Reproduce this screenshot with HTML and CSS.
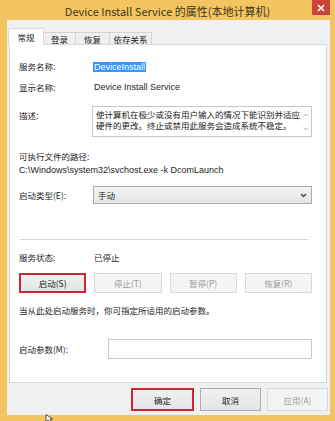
FILE: index.html
```html
<!DOCTYPE html>
<html>
<head>
<meta charset="utf-8">
<link rel="stylesheet" href="styles.css">
</head>
<body>
<div class="window">
  <div class="titlebar">
    <span class="title">Device Install Service 的属性(本地计算机)</span>
    <div class="close">
      <svg width="8" height="8" viewBox="0 0 8 8"><path d="M1 1L7 7M7 1L1 7" stroke="#fff" stroke-width="1.6"/></svg>
    </div>
  </div>
  <div class="client">
    <div class="tabs">
      <div class="tab active">常规</div>
      <div class="tab">登录</div>
      <div class="tab">恢复</div>
      <div class="tab">依存关系</div>
    </div>
    <div class="panel">
      <div class="row r1">
        <span class="label">服务名称:</span>
        <span class="value"><span class="sel">DeviceInstall</span></span>
      </div>
      <div class="row r2">
        <span class="label">显示名称:</span>
        <span class="value latin">Device Install Service</span>
      </div>
      <div class="row r3">
        <span class="label desc-label">描述:</span>
        <div class="textbox">
          <div class="tb-text">使计算机在极少或没有用户输入的情况下能识别并适应硬件的更改。终止或禁用此服务会造成系统不稳定。</div>
          <div class="scroll">
            <svg width="6" height="4" viewBox="0 0 6 4"><path d="M0.5 3.5L3 1L5.5 3.5" fill="none" stroke="#b8b8b8" stroke-width="1"/></svg>
            <svg width="6" height="4" viewBox="0 0 6 4"><path d="M0.5 0.5L3 3L5.5 0.5" fill="none" stroke="#b8b8b8" stroke-width="1"/></svg>
          </div>
        </div>
      </div>
      <div class="row r4"><span class="label">可执行文件的路径:</span></div>
      <div class="row r5"><span class="latin">C:\Windows\system32\svchost.exe -k DcomLaunch</span></div>
      <div class="row r6">
        <span class="label">启动类型(E):</span>
        <div class="select">
          <span>手动</span>
          <svg width="7" height="5" viewBox="0 0 7 5"><path d="M1 1L3.5 3.5L6 1" fill="none" stroke="#444" stroke-width="1.3"/></svg>
        </div>
      </div>
      <div class="sep"></div>
      <div class="row r7">
        <span class="label">服务状态:</span>
        <span class="value">已停止</span>
      </div>
      <div class="btnrow">
        <div class="btn marked">启动(S)</div>
        <div class="btn disabled">停止(T)</div>
        <div class="btn disabled">暂停(P)</div>
        <div class="btn disabled">恢复(R)</div>
      </div>
      <div class="row r8">当从此处启动服务时，你可指定所适用的启动参数。</div>
      <div class="row r9">
        <span class="label wide">启动参数(M):</span>
        <div class="input"></div>
      </div>
    </div>
    <div class="footer">
      <div class="btn fbtn marked">确定</div>
      <div class="btn fbtn">取消</div>
      <div class="btn fbtn disabled">应用(A)</div>
    </div>
  </div>
  <svg class="cursor" width="9" height="8" viewBox="0 0 9 8"><path d="M1 0.5L1 8L3 6L5 8.5L6.5 7.5L4.8 5.2L7.5 5Z" fill="#fff" stroke="#222" stroke-width="0.8"/></svg>
</div>
</body>
</html>
```

FILE: styles.css
```css
* { box-sizing: border-box; }
html, body { margin: 0; padding: 0; }
body {
  width: 335px;
  height: 421px;
  overflow: hidden;
  background: #f2c35a;
  font-family: "Noto Sans CJK SC", "Liberation Sans", sans-serif;
  font-size: 8.5px;
  color: #1e1e1e;
}
.window {
  position: relative;
  width: 335px;
  height: 421px;
  background: #f3c55e;
  display: flex;
  flex-direction: column;
}
.titlebar {
  height: 20px;
  display: flex;
  align-items: center;
  justify-content: center;
  padding-top: 2px;
}
.title {
  font-size: 11px;
  color: #403621;
}
.close {
  position: absolute;
  top: 0;
  right: 5px;
  width: 18px;
  height: 15px;
  background: #c9453b;
  display: flex;
  align-items: center;
  justify-content: center;
}
.client {
  margin: 0 5px 0 7px;
  height: 395px;
  background: #f0f0f0;
  display: flex;
  flex-direction: column;
}
.tabs {
  display: flex;
  align-items: flex-end;
  padding: 7px 0 0 1px;
  height: 24px;
}
.tab {
  height: 12px;
  padding: 0;
  border: 1px solid #d4d4d4;
  border-bottom: none;
  background: #f0f0f0;
  display: flex;
  align-items: center;
  justify-content: center;
  white-space: nowrap;
  margin-left: -1px;
  color: #222;
  flex: none;
}
.tab:nth-child(1) { width: 36px; margin-left: 0; }
.tab:nth-child(2) { width: 33px; }
.tab:nth-child(3) { width: 35px; }
.tab:nth-child(4) { width: 43px; }
.tab.active {
  height: 17px;
  background: #fff;
  position: relative;
  z-index: 1;
  margin-bottom: -1px;
  padding-bottom: 1px;
  border-color: #d9d9d9;
}
.panel {
  margin: 0 3px 0 2px;
  height: 339px;
  background: #fff;
  border: 1px solid #d9d9d9;
  padding: 0 14px 0 9px;
  display: flex;
  flex-direction: column;
}
.row {
  display: flex;
  align-items: center;
  height: 14px;
  white-space: nowrap;
}
.label { width: 75px; flex: none; }
.label.wide { width: 89px; }
.latin { font-family: "Liberation Sans", sans-serif; font-size: 9px; }
.sel {
  background: #3399ff;
  color: #fff;
  font-family: "Liberation Sans", sans-serif;
  font-size: 9px;
  padding: 0 1px;
  line-height: 10px;
  display: inline-block;
  margin-left: -1px;
}
.r1 { margin-top: 14px; }
.r2 { margin-top: 7px; }
.r3 {
  margin-top: 12px;
  height: 31px;
  align-items: stretch;
}
.desc-label { padding-top: 3px; width: 73px; }
.textbox {
  flex: 1;
  border: 1px solid #c8c8c8;
  display: flex;
  padding: 1px 0 0 3px;
}
.tb-text {
  flex: 1;
  line-height: 10.5px;
  white-space: normal;
  padding-top: 1px;
  color: #222;
}
.scroll {
  width: 10px;
  display: flex;
  flex-direction: column;
  justify-content: space-between;
  align-items: center;
  padding: 5px 0 5px;
}
.r4 { margin-top: 12px; }
.r6 { margin-top: 9px; height: 18px; }
.r6 .label { width: 74px; }
.select {
  flex: 1;
  height: 18px;
  border: 1px solid #acacac;
  background: linear-gradient(#f2f2f2, #e6e6e6);
  display: flex;
  align-items: center;
  justify-content: space-between;
  padding: 0 4px 0 4px;
}
.sep {
  margin-top: 35px;
  height: 1px;
  background: #d6d6d6;
  margin-right: 4px;
  margin-left: 1px;
}
.r7 { margin-top: 10px; }
.btnrow {
  margin-top: 9px;
  display: grid;
  grid-template-columns: repeat(4, 1fr);
  column-gap: 8px;
}
.btn {
  height: 20px;
  border: 1px solid #acacac;
  background: linear-gradient(#f0f0f0, #e5e5e5);
  display: flex;
  align-items: center;
  justify-content: center;
  color: #222;
}
.btn.disabled {
  border-color: #d9d9d9;
  background: #f4f4f4;
  color: #9d9d9d;
}
.btn.marked {
  border: 2px solid #d3232f;
}
.r8 { margin-top: 10px; }
.r9 { margin-top: 22px; height: 20px; }
.input {
  flex: 1;
  height: 20px;
  border: 1px solid #c8c8c8;
  background: #fff;
}
.footer {
  display: flex;
  justify-content: flex-end;
  gap: 6px;
  padding: 5px 2px 0 0;
}
.fbtn {
  width: 61px;
  height: 23px;
}
.fbtn.marked { width: 63px; }
.cursor {
  position: absolute;
  left: 45px;
  top: 414px;
}
```
